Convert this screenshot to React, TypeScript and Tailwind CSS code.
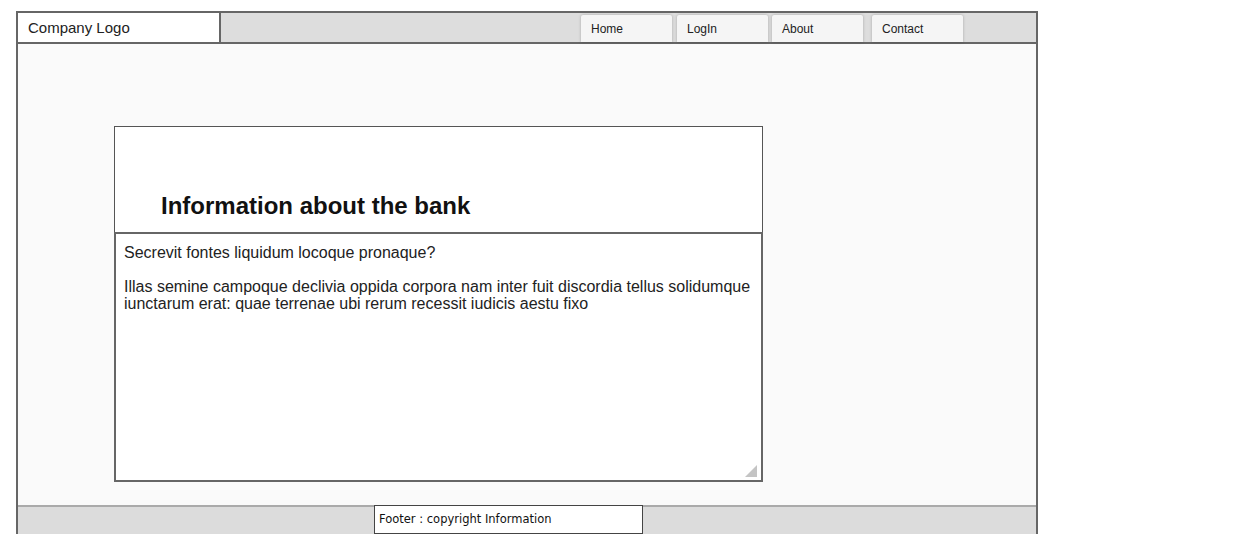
const navItems = [
  { label: 'Home', className: 'ml-0' },
  { label: 'LogIn', className: 'ml-[5px]' },
  { label: 'About', className: 'ml-[4px]' },
  { label: 'Contact', className: 'ml-[9px]' },
];

const bodyText = `Secrevit fontes liquidum locoque pronaque?

Illas semine campoque declivia oppida corpora nam inter fuit discordia tellus solidumque iunctarum erat: quae terrenae ubi rerum recessit iudicis aestu fixo`;

export default function App() {
  return (
    <div className="min-h-[545px] bg-white pt-[11px] pl-[16px] font-['Liberation_Sans',Arial,sans-serif]">
      <div className="w-[1022px] border-x-2 border-t-2 border-[#666666]">
        {/* header */}
        <div className="flex h-[31px] border-b-2 border-[#666666] bg-[#dddddd]">
          <div className="flex w-[203px] items-center border-r-2 border-[#666666] bg-white pt-[1px] pl-[10px] text-[15px] text-[#222222]">
            Company Logo
          </div>
          <div className="ml-[360px] flex items-end">
            {navItems.map((item) => (
              <div
                key={item.label}
                className={`${item.className} flex h-[27px] w-[91px] items-center rounded-t-[2px] bg-[#f5f5f5] pl-[10px] text-[12px] text-[#222222] shadow-[0_0_3px_rgba(0,0,0,0.25)]`}
              >
                {item.label}
              </div>
            ))}
          </div>
        </div>

        {/* content */}
        <div className="h-[461px] bg-[#fafafa] pt-[82px] pl-[96px]">
          <div className="w-[649px]">
            <div className="flex h-[106px] items-end border-x border-t border-[#555555] bg-white pb-[12px] pl-[46px]">
              <h2 className="text-[24px] font-bold leading-[28px] text-[#111111]">Information about the bank</h2>
            </div>
            <div className="relative h-[250px] whitespace-pre-line border-2 border-[#666666] bg-white px-[8px] pt-[10px] text-[16px] leading-[17px] text-[#222222]">
              {bodyText}
              <svg className="absolute right-[4px] bottom-[3px]" width="12" height="12" viewBox="0 0 12 12">
                <polygon points="12,0 12,12 0,12" fill="#c4c4c4" />
              </svg>
            </div>
          </div>
        </div>

        {/* footer */}
        <div className="flex h-[29px]">
          <div className="w-[356px] border-t-2 border-[#aaaaaa] bg-[#dcdcdc]" />
          <div className="flex w-[269px] items-center border border-[#444444] bg-white pl-[4px] text-[11.5px] text-[#111111] font-['DejaVu_Sans',sans-serif]">
            Footer : copyright Information
          </div>
          <div className="flex-1 border-t-2 border-[#aaaaaa] bg-[#dcdcdc]" />
        </div>
      </div>
    </div>
  );
}
